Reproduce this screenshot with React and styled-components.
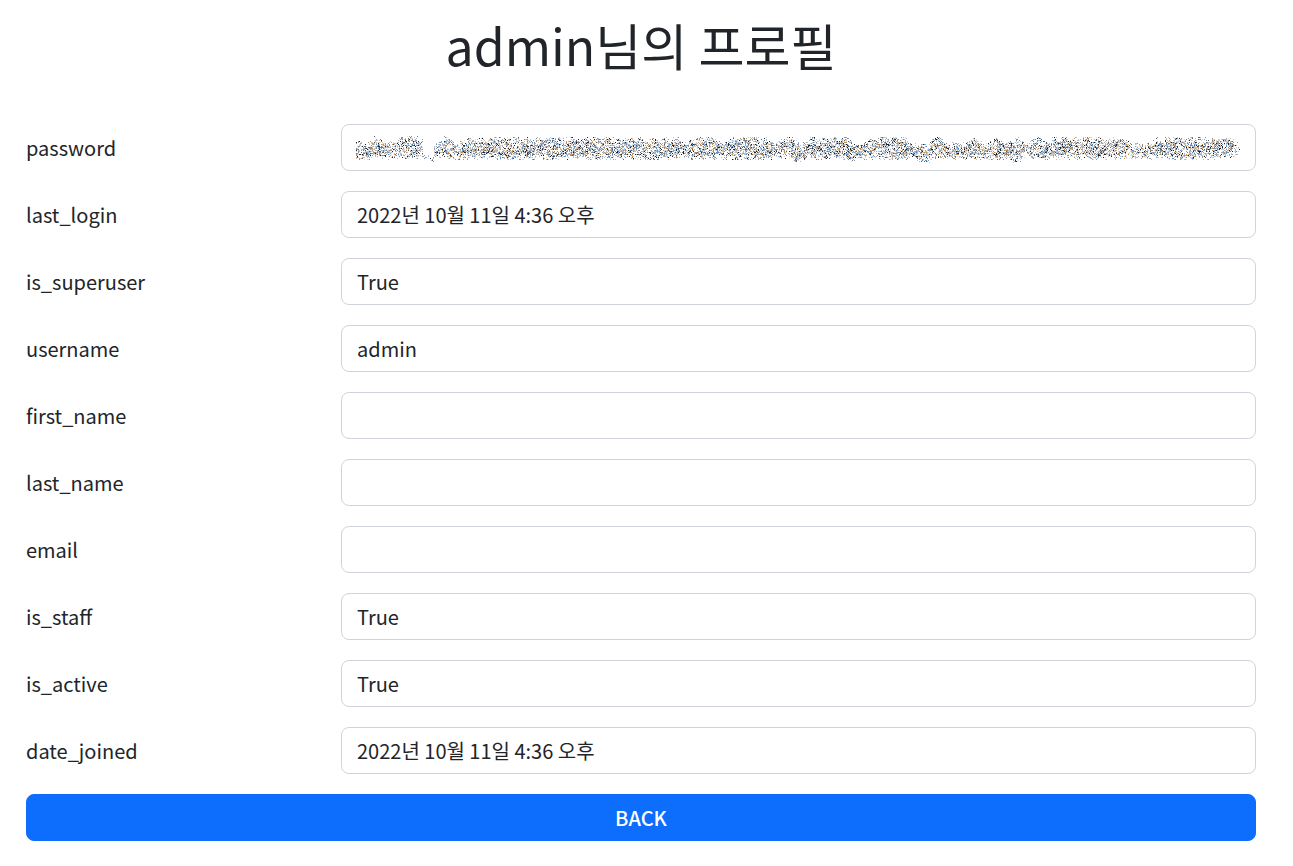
import React from "react";
import styled, { createGlobalStyle } from "styled-components";

const GlobalStyle = createGlobalStyle`
  *, *::before, *::after {
    box-sizing: border-box;
  }
  body {
    margin: 0;
    background: #fff;
    color: #212529;
    font-family: "Noto Sans CJK KR", "Noto Sans", sans-serif;
    font-size: 20px;
    line-height: 30px;
  }
`;

const Page = styled.main`
  padding: 14px 37px 25px 26px;
`;

const Title = styled.h1`
  margin: 0 0 50px;
  font-size: 50px;
  font-weight: 400;
  line-height: 60px;
  text-align: center;
`;

const Fields = styled.form`
  display: flex;
  flex-direction: column;
  gap: 20px;
`;

const Row = styled.div`
  display: grid;
  grid-template-columns: 1fr 3fr;
  column-gap: 10px;
  align-items: center;
`;

const Label = styled.label`
  min-width: 0;
`;

const InputWrap = styled.div`
  position: relative;
  min-width: 0;
`;

const Input = styled.input`
  display: block;
  width: 100%;
  height: 47px;
  padding: 0 15px;
  border: 1px solid #ced4da;
  border-radius: 8px;
  background: #fff;
  color: inherit;
  font: inherit;
  outline: none;
`;

const BackButton = styled.button`
  display: block;
  width: 100%;
  height: 47px;
  padding: 0 15px;
  border: 1px solid #0d6efd;
  border-radius: 8px;
  background: #0d6efd;
  color: #fff;
  font: inherit;
  font-weight: 500;
  text-align: center;
  cursor: pointer;
`;

const Scramble = styled.svg`
  position: absolute;
  top: 10px;
  left: 15px;
  width: calc(100% - 30px);
  height: 30px;
  pointer-events: none;
`;

// Outline of the scrambled line: [x, top, bottom].
const OUTLINE = [
  [0, 8, 24], [14, 8, 24], [18, 3, 23], [24, 4, 23], [30, 8, 24], [40, 7, 24],
  [46, 3, 23], [62, 3, 23], [66, 6, 21], [67, 22, 26], [77, 22, 26], [78, 10, 22],
  [88, 3, 23], [98, 8, 24], [108, 7, 24], [112, 4, 24], [284, 4, 24], [288, 7, 24],
  [299, 4, 24], [322, 4, 24], [330, 9, 24], [339, 4, 24], [359, 4, 24], [368, 9, 24],
  [374, 4, 24], [412, 4, 24], [418, 10, 24], [428, 4, 23], [436, 4, 23], [438, 6, 28],
  [443, 8, 28], [446, 9, 24], [454, 4, 24], [482, 4, 24], [490, 4, 24], [492, 5, 27],
  [497, 8, 26], [503, 8, 24], [520, 4, 24], [549, 4, 24], [555, 9, 24], [563, 11, 28],
  [573, 10, 28], [576, 6, 24], [582, 3, 23], [590, 8, 24], [608, 9, 24], [616, 4, 24],
  [622, 6, 24], [630, 10, 24], [641, 4, 24], [650, 8, 24], [658, 3, 28], [662, 4, 28],
  [668, 9, 23], [682, 4, 24], [690, 8, 24], [696, 4, 24], [764, 4, 24], [774, 8, 23],
  [794, 10, 24], [800, 4, 24], [866, 4, 24], [874, 5, 22], [880, 7, 21], [884, 12, 15],
];

const INKS = [
  "#b3b6bb", "#8f9399", "#5a5e65", "#1d2230", "#9ec3e6", "#5f8cb4",
  "#dcc09c", "#b58a55", "#d5dbe2", "#c3c6cb", "#a3a7ad", "#e3dcd4",
];

function scatterInk() {
  let seed = 20221011;
  const random = () => {
    seed = (Math.imul(seed, 1664525) + 1013904223) >>> 0;
    return seed / 4294967296;
  };
  const paths = INKS.map(() => "");
  let segment = 0;
  for (let x = 0; x < 884; x += 1) {
    while (segment < OUTLINE.length - 2 && OUTLINE[segment + 1][0] <= x) segment += 1;
    const [x0, t0, b0] = OUTLINE[segment];
    const [x1, t1, b1] = OUTLINE[segment + 1];
    const k = (x - x0) / (x1 - x0);
    const top = t0 + (t1 - t0) * k;
    const bottom = b0 + (b1 - b0) * k;
    for (let y = 2; y < 29; y += 1) {
      const edge = Math.min(y - top, bottom - y);
      if (edge < -1) continue;
      const base = edge < 1 ? 0.2 : edge < 4 ? 0.4 : 0.62;
      const clump = 0.14 * Math.sin(x * 0.55 + Math.sin(y * 0.4) * 2) + 0.08 * Math.sin(x * 0.13 + y * 0.3);
      if (random() < base + clump) {
        const ink = Math.floor(random() * INKS.length);
        paths[ink] += `M${x} ${y}h1v1h-1z`;
      }
    }
  }
  return paths;
}

const INK_PATHS = scatterInk();

const FIELDS = [
  { name: "password", value: "", scrambled: true },
  { name: "last_login", value: "2022년 10월 11일 4:36 오후" },
  { name: "is_superuser", value: "True" },
  { name: "username", value: "admin" },
  { name: "first_name", value: "" },
  { name: "last_name", value: "" },
  { name: "email", value: "" },
  { name: "is_staff", value: "True" },
  { name: "is_active", value: "True" },
  { name: "date_joined", value: "2022년 10월 11일 4:36 오후" },
];

function ScrambledText() {
  return (
    <Scramble viewBox="0 0 885 30" preserveAspectRatio="none" shapeRendering="crispEdges" aria-hidden="true">
      {INK_PATHS.map((d, i) => (
        <path key={INKS[i]} d={d} fill={INKS[i]} />
      ))}
    </Scramble>
  );
}

export default function App() {
  return (
    <>
      <GlobalStyle />
      <Page>
        <Title>admin님의 프로필</Title>
        <Fields>
          {FIELDS.map(({ name, value, scrambled }) => (
            <Row key={name}>
              <Label htmlFor={name}>{name}</Label>
              <InputWrap>
                <Input id={name} name={name} type="text" value={value} readOnly />
                {scrambled && <ScrambledText />}
              </InputWrap>
            </Row>
          ))}
          <BackButton type="button">BACK</BackButton>
        </Fields>
      </Page>
    </>
  );
}
